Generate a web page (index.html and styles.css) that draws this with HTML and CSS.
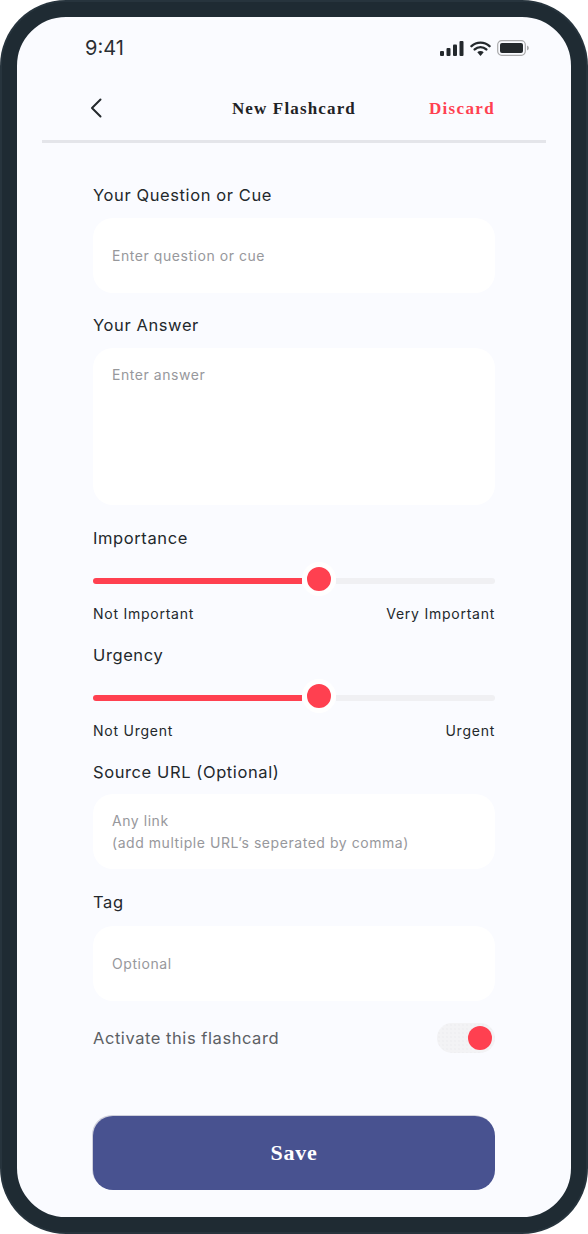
FILE: index.html
```html
<!DOCTYPE html>
<html>
<head>
  <title>New Flashcard</title>
  <link rel="stylesheet" href="styles.css">
</head>
<body>
  <div class="phone">
    <div class="screen">
      <div class="status">
        <span class="time">9:41</span>
        <div class="status-icons">
          <svg width="24" height="15" viewBox="0 0 24 15"><rect x="0" y="10" width="4" height="5" rx="1"/><rect x="6.5" y="7" width="4" height="8" rx="1"/><rect x="13" y="3.5" width="4" height="11.500" rx="1"/><rect x="19.500" y="0" width="4" height="15" rx="1"/></svg>
          <svg width="21" height="15" viewBox="0 0 21 15"><path d="M1.500 5.200a13 13 0 0 1 18 0M4.700 8.400a8.500 8.500 0 0 1 11.600 0" fill="none" stroke="#23282c" stroke-width="2.400" stroke-linecap="round"/><path d="M7.300 11.200a4.600 4.600 0 0 1 6.400 0L10.500 15z"/></svg>
          <svg width="33" height="16" viewBox="0 0 33 16"><rect x="0.700" y="0.700" width="27.600" height="14.600" rx="4" fill="none" stroke="#a9a9ab" stroke-width="1.200"/><rect x="3" y="3" width="23" height="10" rx="2"/><path d="M30 5.500a2.600 2.600 0 0 1 0 5z" fill="#a9a9ab"/></svg>
        </div>
      </div>

      <div class="nav">
        <svg class="back" width="14" height="22" viewBox="0 0 14 22"><path d="M11.500 2.500 3 11l8.500 8.500" fill="none" stroke="#23282c" stroke-width="2" stroke-linecap="round" stroke-linejoin="round"/></svg>
        <span class="nav-title">New Flashcard</span>
        <span class="discard">Discard</span>
      </div>

      <form class="form">
        <label class="label">Your Question or Cue</label>
        <div class="field field-one">Enter question or cue</div>

        <label class="label label-gap">Your Answer</label>
        <div class="field field-area">Enter answer</div>

        <label class="label label-wide">Importance</label>
        <div class="slider">
          <div class="slider-fill"></div>
          <div class="slider-thumb"></div>
          <div class="slider-rest"></div>
        </div>
        <div class="slider-labels"><span>Not Important</span><span>Very Important</span></div>

        <label class="label label-tight">Urgency</label>
        <div class="slider">
          <div class="slider-fill"></div>
          <div class="slider-thumb"></div>
          <div class="slider-rest"></div>
        </div>
        <div class="slider-labels"><span>Not Urgent</span><span>Urgent</span></div>

        <label class="label label-tight">Source URL (Optional)</label>
        <div class="field field-two">Any link<br>(add multiple URL’s seperated by comma)</div>

        <label class="label label-wide">Tag</label>
        <div class="field field-tag">Optional</div>

        <div class="activate">
          <span>Activate this flashcard</span>
          <div class="toggle"><div class="toggle-thumb"></div></div>
        </div>

        <button type="button" class="save">Save</button>
      </form>
    </div>
  </div>
</body>
</html>
```

FILE: styles.css
```css
* {
  box-sizing: border-box;
}
body {
  margin: 0;
  background-color: #ffffff;
  font-family: "Inter", sans-serif;
}
.phone {
  width: 588px;
  height: 1234px;
  padding: 2px;
  border-radius: 66px;
  background-color: #27343d;
}
.screen {
  height: 100%;
  border: 15px solid #1f2b33;
  border-radius: 64px;
  background-color: #fafbff;
}
.status {
  height: 60px;
  padding: 2px 41px 0 68px;
  display: flex;
  justify-content: space-between;
  align-items: center;
}
.time {
  font-size: 20px;
  color: #2a2f33;
}
.status-icons {
  display: flex;
  align-items: center;
  gap: 6px;
  fill: #23282c;
}
.nav {
  margin: 0 25px;
  height: 66px;
  padding: 0 51px 0 42px;
  border-bottom: 3px solid #e4e5ea;
  display: flex;
  justify-content: space-between;
  align-items: center;
}
.back {
  margin-left: 5px;
  margin-top: -2px;
}
.nav-title {
  font-family: "Liberation Serif", serif;
  font-weight: bold;
  font-size: 17px;
  letter-spacing: 1.15px;
  color: #1f2326;
  margin-left: 56px;
}
.discard {
  font-family: "Liberation Serif", serif;
  font-weight: bold;
  font-size: 17px;
  letter-spacing: 1.35px;
  color: #ff4050;
}
.form {
  padding: 40px 76px 0;
}
.label {
  display: block;
  height: 24px;
  line-height: 24px;
  font-size: 16.500px;
  letter-spacing: 0.6px;
  color: #23282c;
}
.label-gap {
  margin-top: 20px;
}
.label-wide {
  margin-top: 21px;
}
.label-tight {
  margin-top: 19px;
}
.field {
  margin-top: 11px;
  padding: 0 19px;
  background-color: #ffffff;
  border-radius: 20px;
  font-size: 14px;
  letter-spacing: 0.55px;
  color: #97989c;
}
.field-one {
  height: 75px;
  line-height: 75px;
}
.field-area {
  height: 157px;
  padding-top: 15px;
  line-height: 24px;
}
.field-two {
  height: 75px;
  margin-top: 10px;
  padding-top: 16px;
  line-height: 22px;
}
.field-tag {
  height: 75px;
  margin-top: 12px;
  line-height: 75px;
}
.slider {
  height: 34px;
  margin-top: 12px;
  display: flex;
  align-items: center;
}
.slider-fill {
  width: 209px;
  height: 6px;
  margin-top: 4px;
  border-radius: 3px 0 0 3px;
  background-color: #ff4050;
}
.slider-thumb {
  width: 34px;
  height: 34px;
  border: 5px solid #ffffff;
  border-radius: 50%;
  background-color: #ff4050;
}
.slider-rest {
  flex: 1;
  height: 6px;
  margin-top: 4px;
  border-radius: 0 3px 3px 0;
  background-color: #f0f0f3;
}
.slider-labels {
  margin-top: 8px;
  height: 20px;
  line-height: 20px;
  display: flex;
  justify-content: space-between;
  font-size: 14px;
  letter-spacing: 0.75px;
  color: #23282c;
}
.activate {
  margin-top: 22px;
  height: 30px;
  display: flex;
  justify-content: space-between;
  align-items: center;
  font-size: 16.500px;
  letter-spacing: 0.55px;
  color: #5c6064;
}
.toggle {
  width: 58px;
  height: 30px;
  padding: 3px;
  border-radius: 15px;
  background-color: #f3f3f5;
  background-image: radial-gradient(#eaeaed 0.6px, transparent 0.8px);
  background-size: 4px 4px;
  display: flex;
  justify-content: flex-end;
}
.toggle-thumb {
  width: 24px;
  height: 24px;
  border-radius: 50%;
  background-color: #ff4050;
}
.save {
  display: block;
  width: 100%;
  height: 74px;
  margin-top: 63px;
  border: none;
  border-radius: 20px;
  background-color: #485290;
  box-shadow: -1px -1px 0 #cfd0dc;
  font-family: "Liberation Serif", serif;
  font-weight: bold;
  font-size: 22px;
  letter-spacing: 0.8px;
  color: #ffffff;
}
```
